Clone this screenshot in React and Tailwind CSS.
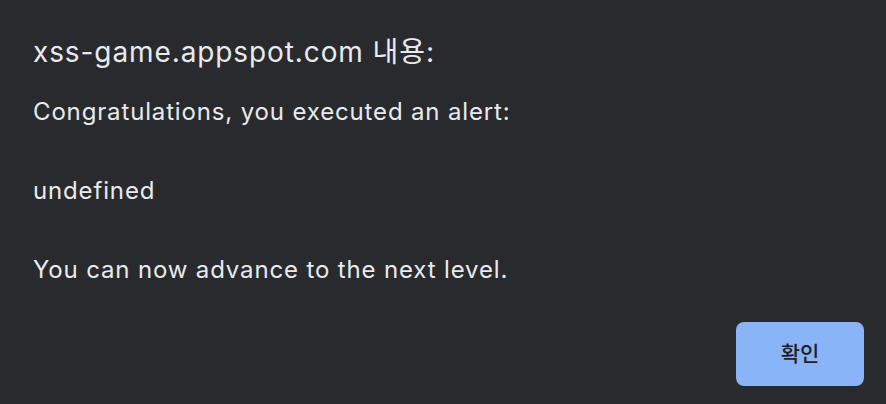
import React from 'react';

const App = () => {
  return (
    <div
      className="w-[886px] h-[404px] bg-[#292a2d] text-[#e8eaed] flex flex-col px-[33px]"
      style={{ fontFamily: 'Inter, "Noto Sans CJK KR", sans-serif' }}
    >
      <h1 className="text-[28px] leading-[34px] mt-[35px] font-normal tracking-[0.9px]">xss-game.appspot.com 내용:</h1>
      <div className="text-[24px] leading-[39.5px] mt-[23px] tracking-[0.85px]">
        <p>Congratulations, you executed an alert:</p>
        <p>&nbsp;</p>
        <p>undefined</p>
        <p>&nbsp;</p>
        <p>You can now advance to the next level.</p>
      </div>
      <div className="flex justify-end mt-auto mb-[18px] -mr-[11px]">
        <button className="w-[128px] h-[64px] rounded-[8px] bg-[#8ab4f8] text-[#202124] text-[21px] font-medium">
          확인
        </button>
      </div>
    </div>
  );
};

export default App;
